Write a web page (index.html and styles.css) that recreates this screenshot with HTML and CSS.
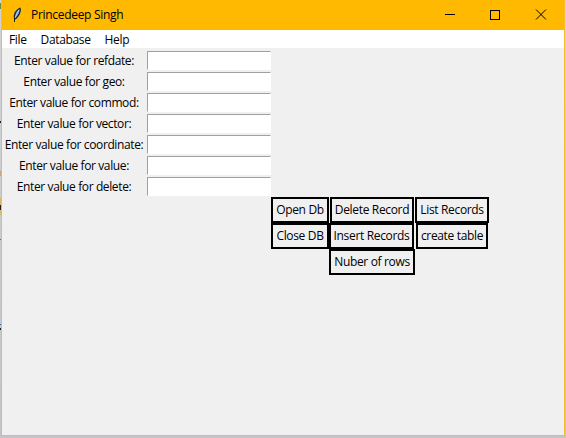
FILE: index.html
```html
<!DOCTYPE html>
<html lang="en">
<head>
<meta charset="utf-8">
<title>Princedeep Singh</title>
<link rel="stylesheet" href="styles.css">
</head>
<body>
<div class="window">
  <header class="titlebar">
    <svg class="feather" width="10" height="18" viewBox="0 0 10 18"><path d="M2 13C.8 8 3.500 3.500 8.500 1.500 9.800 5 7.500 10.500 3.500 13.500z" fill="#15202c"/><path d="M3 11C3 7.500 4.800 4.800 7.600 3 8 6 6 9.500 3.500 11.500z" fill="#5b9bdf"/><path d="M6.800 4L3 12" stroke="#d5e9f8" stroke-width=".8"/><path d="M2.500 12v4" stroke="#15202c"/></svg>
    <h1>Princedeep Singh</h1>
    <svg class="controls" width="102" height="12" viewBox="0 0 102 12" fill="none" stroke="#000"><path d="M0 5.500h10M45.500 1.500h9v9h-9z" shape-rendering="crispEdges"/><path d="M91 .5l10 10M101 .5L91 10.500"/></svg>
  </header>
  <nav class="menu"><span>File</span><span>Database</span><span>Help</span></nav>
  <main>
    <div class="form">
      <label for="a">Enter value for refdate:</label><input id="a">
      <label for="b">Enter value for geo:</label><input id="b">
      <label for="c">Enter value for commod:</label><input id="c">
      <label for="d">Enter value for vector:</label><input id="d">
      <label for="e">Enter value for coordinate:</label><input id="e">
      <label for="f">Enter value for value:</label><input id="f">
      <label for="g">Enter value for delete:</label><input id="g">
    </div>
    <div class="actions">
      <button class="w58">Open Db</button><button class="w84 right">Delete Record</button><button class="w74">List Records</button>
      <button class="w58">Close DB</button><button class="w85">Insert Records</button><button class="w72">create table</button>
      <button class="w86 last">Nuber of rows</button>
    </div>
  </main>
</div>
</body>
</html>
```
FILE: styles.css
```css
* { box-sizing: border-box; }
body {
  margin: 0;
  height: 438px;
  overflow: hidden;
  padding: 0 1px 2px;
  /* slivers of the desktop behind the window */
  background:
    linear-gradient(#222, #222) 0 205px / 1px 5px no-repeat,
    linear-gradient(#d9b870, #d9b870) 0 198px / 1px 17px no-repeat,
    linear-gradient(#d2a070, #d2a070) 0 171px / 1px 5px no-repeat,
    linear-gradient(#222, #222) 0 121px / 1px 2px no-repeat,
    linear-gradient(#4a8070, #4a8070) 0 239px / 1px 1px no-repeat,
    linear-gradient(#2860b0, #2860b0) 0 324px / 1px 1px no-repeat,
    linear-gradient(#222, #222) 0 328px / 1px 2px no-repeat,
    linear-gradient(#6a8a4a, #6a8a4a) 0 3px / 1px 6px no-repeat,
    linear-gradient(#d4d4d4, #c6c4c6);
  color: #000;
  font: 12px/16px "Open Sans", "Noto Sans", sans-serif;
  letter-spacing: -0.3px;
}
.window {
  height: 436px;
  border: 1px solid #f5bc2c;
  border-top: 0;
  background: #f0f0f0;
}
.titlebar {
  display: flex;
  align-items: center;
  height: 30px;
  padding-left: 10px;
  background: #ffb900;
}
.feather { margin-right: 9px; }
h1 { margin: 0; font-size: 12px; font-weight: 400; }
.controls { margin: 0 17px 1px auto; }
.menu {
  display: flex;
  gap: 14px;
  height: 18px;
  padding: 2px 7px 0;
  background: #fff;
  letter-spacing: -0.35px;
}
.form {
  display: grid;
  grid-template-columns: 144px 124px;
  grid-auto-rows: 21px;
  align-items: center;
  padding: 2px 0 0 1px;
}
label {
  padding: 1px 2px 0 0;
  text-align: center;
  letter-spacing: -0.38px;
  white-space: nowrap;
}
input {
  width: 124px;
  height: 19px;
  padding: 0 3px;
  border: 1px solid #fff;
  border-top-color: #a0a0a0;
  border-left-color: #a0a0a0;
  background: #fff;
  font: inherit;
}
.actions {
  display: grid;
  grid-template-columns: 58px 86px 74px;
  grid-auto-rows: 26px;
  justify-items: center;
  margin-left: 269px;
}
button {
  height: 26px;
  padding: 0;
  border: 2px solid #000;
  background: #f0f0f0;
  color: #000;
  font: inherit;
  letter-spacing: -0.34px;
  white-space: nowrap;
}
.right { justify-self: end; margin-right: 1px; }
.w58 { width: 58px; }
.w72 { width: 72px; }
.w74 { width: 74px; }
.w84 { width: 84px; }
.w85 { width: 85px; justify-self: start; }
.w86 { width: 86px; }
.last { grid-column: 2; }
```
